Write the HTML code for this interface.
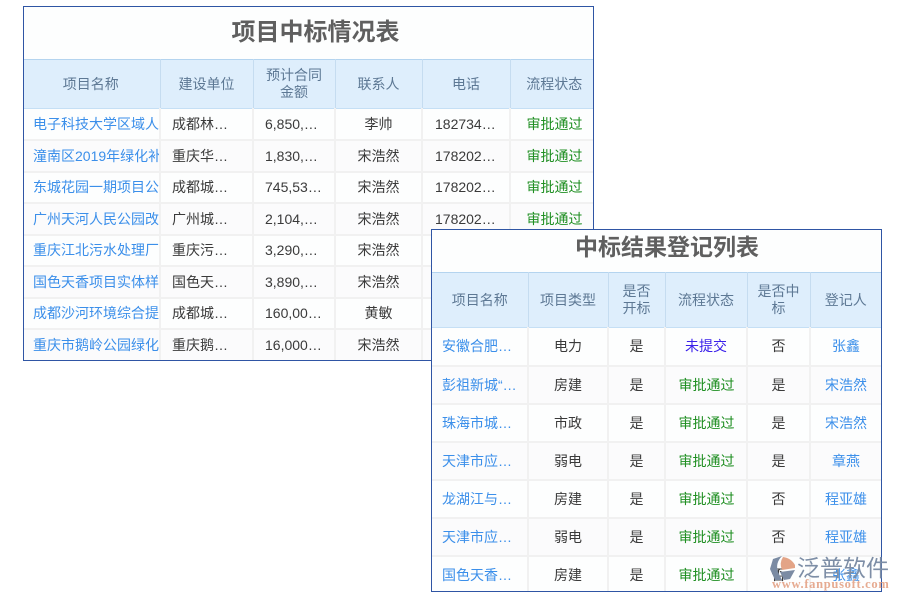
<!DOCTYPE html>
<html lang="zh"><head><meta charset="utf-8"><title>项目中标情况表</title>
<style>
html,body{margin:0;padding:0;background:#fff;width:900px;height:600px;overflow:hidden}
body{font-family:"Liberation Sans","Noto Sans CJK SC",sans-serif;font-size:14px;color:#3a3a3a;position:relative}
.box{position:absolute;background:#fdfefe;border:1px solid #2f55a4;box-sizing:border-box;overflow:hidden}
.title{font-weight:700;color:#5f5f5f;text-align:center;box-sizing:border-box;filter:blur(.3px)}
table{border-collapse:collapse;table-layout:fixed;position:absolute;left:0;background:#fff;filter:blur(.3px)}
th{background:#deeefc;color:#5d7894;font-weight:400;border-right:1px solid #c5dcf0;border-top:1px solid #b4d4ef;border-bottom:1px solid #c5dff5;text-align:center;padding:0;line-height:17px;box-sizing:border-box}
td{border-right:2px solid #f1f1f1;border-bottom:2px solid #f1f1f1;text-align:center;padding:0;white-space:nowrap;overflow:hidden;box-sizing:border-box;background:#fdfefe}
tr:nth-child(even) td{background:#fbfbfc}
th:last-child,td:last-child{border-right:0}
td.l{text-align:left;padding-left:9px}
td.m{text-align:left;padding-left:11px}
td.n{text-align:left;padding-left:11px}
td.o{text-align:left;padding-left:12px}
.a{color:#3b8fea}
.g{color:#1f8f22}
.p{color:#3a20ea}
#t1{left:23px;top:6px;width:571px;height:355px}
#t1 .title{height:52px;line-height:52px;font-size:24px;padding-left:14px}
#t1 table{top:52px;width:569px}
#t1 th{height:49px}
#t1 th:first-child{padding-right:2px}
#t1 td{height:31.5px}
#t1 th:last-child,#t1 td:last-child{padding-left:5px}
#t2{left:431px;top:229px;width:451px;height:363px}
#t2 .title{height:42px;line-height:34px;font-size:23px;padding-left:21px}
#t2 table{top:42px;width:449px}
#t2 th{height:55px}
#t2 td{height:38px}
#t2 td.l{padding-left:10px}
#t2 td.g{padding-left:1px}
.wm{position:absolute;left:770px;top:555px;width:125px;height:42px;pointer-events:none}
.wm .c{position:absolute;left:27px;top:-1px;font-size:23px;line-height:28px;color:#7d8ea6;white-space:nowrap}
.wm .u{position:absolute;left:2px;top:21px;font-family:"Liberation Serif",serif;font-weight:700;font-size:12.5px;line-height:16px;letter-spacing:.7px;color:#e6ab91;white-space:nowrap}
</style></head>
<body>
<div class="box" id="t1">
<div class="title">项目中标情况表</div>
<table>
<colgroup><col style="width:136px"><col style="width:93px"><col style="width:82px"><col style="width:87px"><col style="width:88px"><col style="width:83px"></colgroup>
<thead><tr><th>项目名称</th><th>建设单位</th><th>预计合同<br>金额</th><th>联系人</th><th>电话</th><th>流程状态</th></tr></thead>
<tbody>
<tr><td class="l a">电子科技大学区域人才</td><td class="m">成都林…</td><td class="n">6,850,…</td><td>李帅</td><td class="o">182734…</td><td class="g">审批通过</td></tr>
<tr><td class="l a">潼南区2019年绿化补</td><td class="m">重庆华…</td><td class="n">1,830,…</td><td>宋浩然</td><td class="o">178202…</td><td class="g">审批通过</td></tr>
<tr><td class="l a">东城花园一期项目公园</td><td class="m">成都城…</td><td class="n">745,53…</td><td>宋浩然</td><td class="o">178202…</td><td class="g">审批通过</td></tr>
<tr><td class="l a">广州天河人民公园改造</td><td class="m">广州城…</td><td class="n">2,104,…</td><td>宋浩然</td><td class="o">178202…</td><td class="g">审批通过</td></tr>
<tr><td class="l a">重庆江北污水处理厂项</td><td class="m">重庆污…</td><td class="n">3,290,…</td><td>宋浩然</td><td class="o">178202…</td><td class="g">审批通过</td></tr>
<tr><td class="l a">国色天香项目实体样板</td><td class="m">国色天…</td><td class="n">3,890,…</td><td>宋浩然</td><td class="o">178202…</td><td class="g">审批通过</td></tr>
<tr><td class="l a">成都沙河环境综合提升</td><td class="m">成都城…</td><td class="n">160,00…</td><td>黄敏</td><td class="o">178202…</td><td class="g">审批通过</td></tr>
<tr><td class="l a">重庆市鹅岭公园绿化工</td><td class="m">重庆鹅…</td><td class="n">16,000…</td><td>宋浩然</td><td class="o">178202…</td><td class="g">审批通过</td></tr>
</tbody></table>
</div>

<div class="box" id="t2">
<div class="title">中标结果登记列表</div>
<table>
<colgroup><col style="width:96px"><col style="width:80px"><col style="width:57px"><col style="width:82px"><col style="width:63px"><col style="width:71px"></colgroup>
<thead><tr><th>项目名称</th><th>项目类型</th><th>是否<br>开标</th><th>流程状态</th><th>是否中<br>标</th><th>登记人</th></tr></thead>
<tbody>
<tr><td class="l a">安徽合肥…</td><td>电力</td><td>是</td><td class="p">未提交</td><td>否</td><td class="a">张鑫</td></tr>
<tr><td class="l a">彭祖新城“…</td><td>房建</td><td>是</td><td class="g">审批通过</td><td>是</td><td class="a">宋浩然</td></tr>
<tr><td class="l a">珠海市城…</td><td>市政</td><td>是</td><td class="g">审批通过</td><td>是</td><td class="a">宋浩然</td></tr>
<tr><td class="l a">天津市应…</td><td>弱电</td><td>是</td><td class="g">审批通过</td><td>是</td><td class="a">章燕</td></tr>
<tr><td class="l a">龙湖江与…</td><td>房建</td><td>是</td><td class="g">审批通过</td><td>否</td><td class="a">程亚雄</td></tr>
<tr><td class="l a">天津市应…</td><td>弱电</td><td>是</td><td class="g">审批通过</td><td>否</td><td class="a">程亚雄</td></tr>
<tr><td class="l a">国色天香…</td><td>房建</td><td>是</td><td class="g">审批通过</td><td>否</td><td class="a">张鑫</td></tr>
</tbody></table>
</div>

<div class="wm">
<svg width="26" height="26" viewBox="0 0 26 26" style="position:absolute;left:0;top:1px">
<path d="M12 0 L3 3 L0 13 L5 24 L12 24 L8 16 Q5 7 12 0Z" fill="#7b8ba3"/>
<path d="M13 1 Q21 2 25 9 L25 12 L12 14 Q9 7 13 1Z" fill="#e3a487"/>
<path d="M10 16 L25 14 L20 23 L14 24Z" fill="#7b8ba3"/>
</svg>
<div class="c">泛普软件</div>
<div class="u">www.fanpusoft.com</div>
</div>
</body></html>
